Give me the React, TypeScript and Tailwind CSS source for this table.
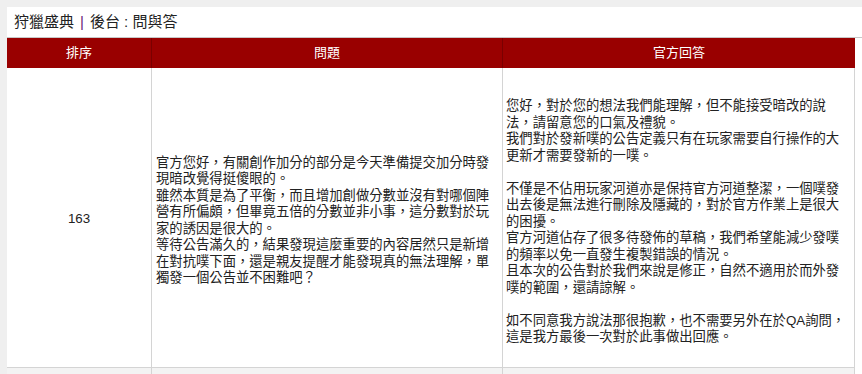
const question = [
  '官方您好，有關創作加分的部分是今天準備提交加分時發現暗改覺得挺傻眼的。',
  '雖然本質是為了平衡，而且增加創做分數並沒有對哪個陣營有所偏頗，但畢竟五倍的分數並非小事，這分數對於玩家的誘因是很大的。',
  '等待公告滿久的，結果發現這麼重要的內容居然只是新增在對抗噗下面，還是親友提醒才能發現真的無法理解，單獨發一個公告並不困難吧？',
];

const answer = [
  '您好，對於您的想法我們能理解，但不能接受暗改的說法，請留意您的口氣及禮貌。',
  '我們對於發新噗的公告定義只有在玩家需要自行操作的大更新才需要發新的一噗。',
  '',
  '不僅是不佔用玩家河道亦是保持官方河道整潔，一個噗發出去後是無法進行刪除及隱藏的，對於官方作業上是很大的困擾。',
  '官方河道佔存了很多待發佈的草稿，我們希望能減少發噗的頻率以免一直發生複製錯誤的情況。',
  '且本次的公告對於我們來說是修正，自然不適用於而外發噗的範圍，還請諒解。',
  '',
  '如不同意我方說法那很抱歉，也不需要另外在於QA詢問，這是我方最後一次對於此事做出回應。',
];

function Lines({ items }: { items: string[] }) {
  return (
    <>
      {items.map((t, i) => (
        <p key={i} className="min-h-[16.5px]">
          {t}
        </p>
      ))}
    </>
  );
}

export default function App() {
  return (
    <div
      className="min-h-screen bg-[#efefef] pl-[7px] pt-[7px] text-[#222]"
      style={{ fontFamily: '"Liberation Sans", "Noto Sans CJK TC", sans-serif' }}
    >
      <div className="bg-white">
        {/* title */}
        <div className="flex h-[31px] items-center border-b border-[#c8c8c8] pl-[7px] text-[15px] text-[#222]">
          <span>狩獵盛典</span>
          <span className="mx-[6px] text-[#6b1a7a]">|</span>
          <span>後台 : 問與答</span>
        </div>

        <div className="w-[848px]">
          {/* header */}
          <div className="grid h-[30px] grid-cols-[145px_351px_352px] bg-[#990000] text-[13px] text-white">
            <div className="flex items-center justify-center border-r border-[#7a0000]">排序</div>
            <div className="flex items-center justify-center border-r border-[#7a0000]">問題</div>
            <div className="flex items-center justify-center">官方回答</div>
          </div>

          {/* row */}
          <div className="grid grid-cols-[145px_351px_352px] border-b border-[#d4d4d4] text-[13.33px] leading-[16.5px]">
            <div className="flex items-center justify-center border-r border-[#d4d4d4] pt-[4px]">163</div>
            <div className="flex flex-col justify-center border-r border-[#d4d4d4] pl-[4px] pr-[6px] pt-[7px]">
              <Lines items={question} />
            </div>
            <div className="border-r border-[#d4d4d4] pb-[21px] pl-[3px] pr-[6px] pt-[30px]">
              <Lines items={answer} />
            </div>
          </div>

          {/* next row */}
          <div className="grid h-[10px] grid-cols-[145px_351px_352px] bg-[#f3f3f3]">
            <div className="border-r border-[#d4d4d4]" />
            <div className="border-r border-[#d4d4d4]" />
            <div className="border-r border-[#d4d4d4]" />
          </div>
        </div>
      </div>
    </div>
  );
}
